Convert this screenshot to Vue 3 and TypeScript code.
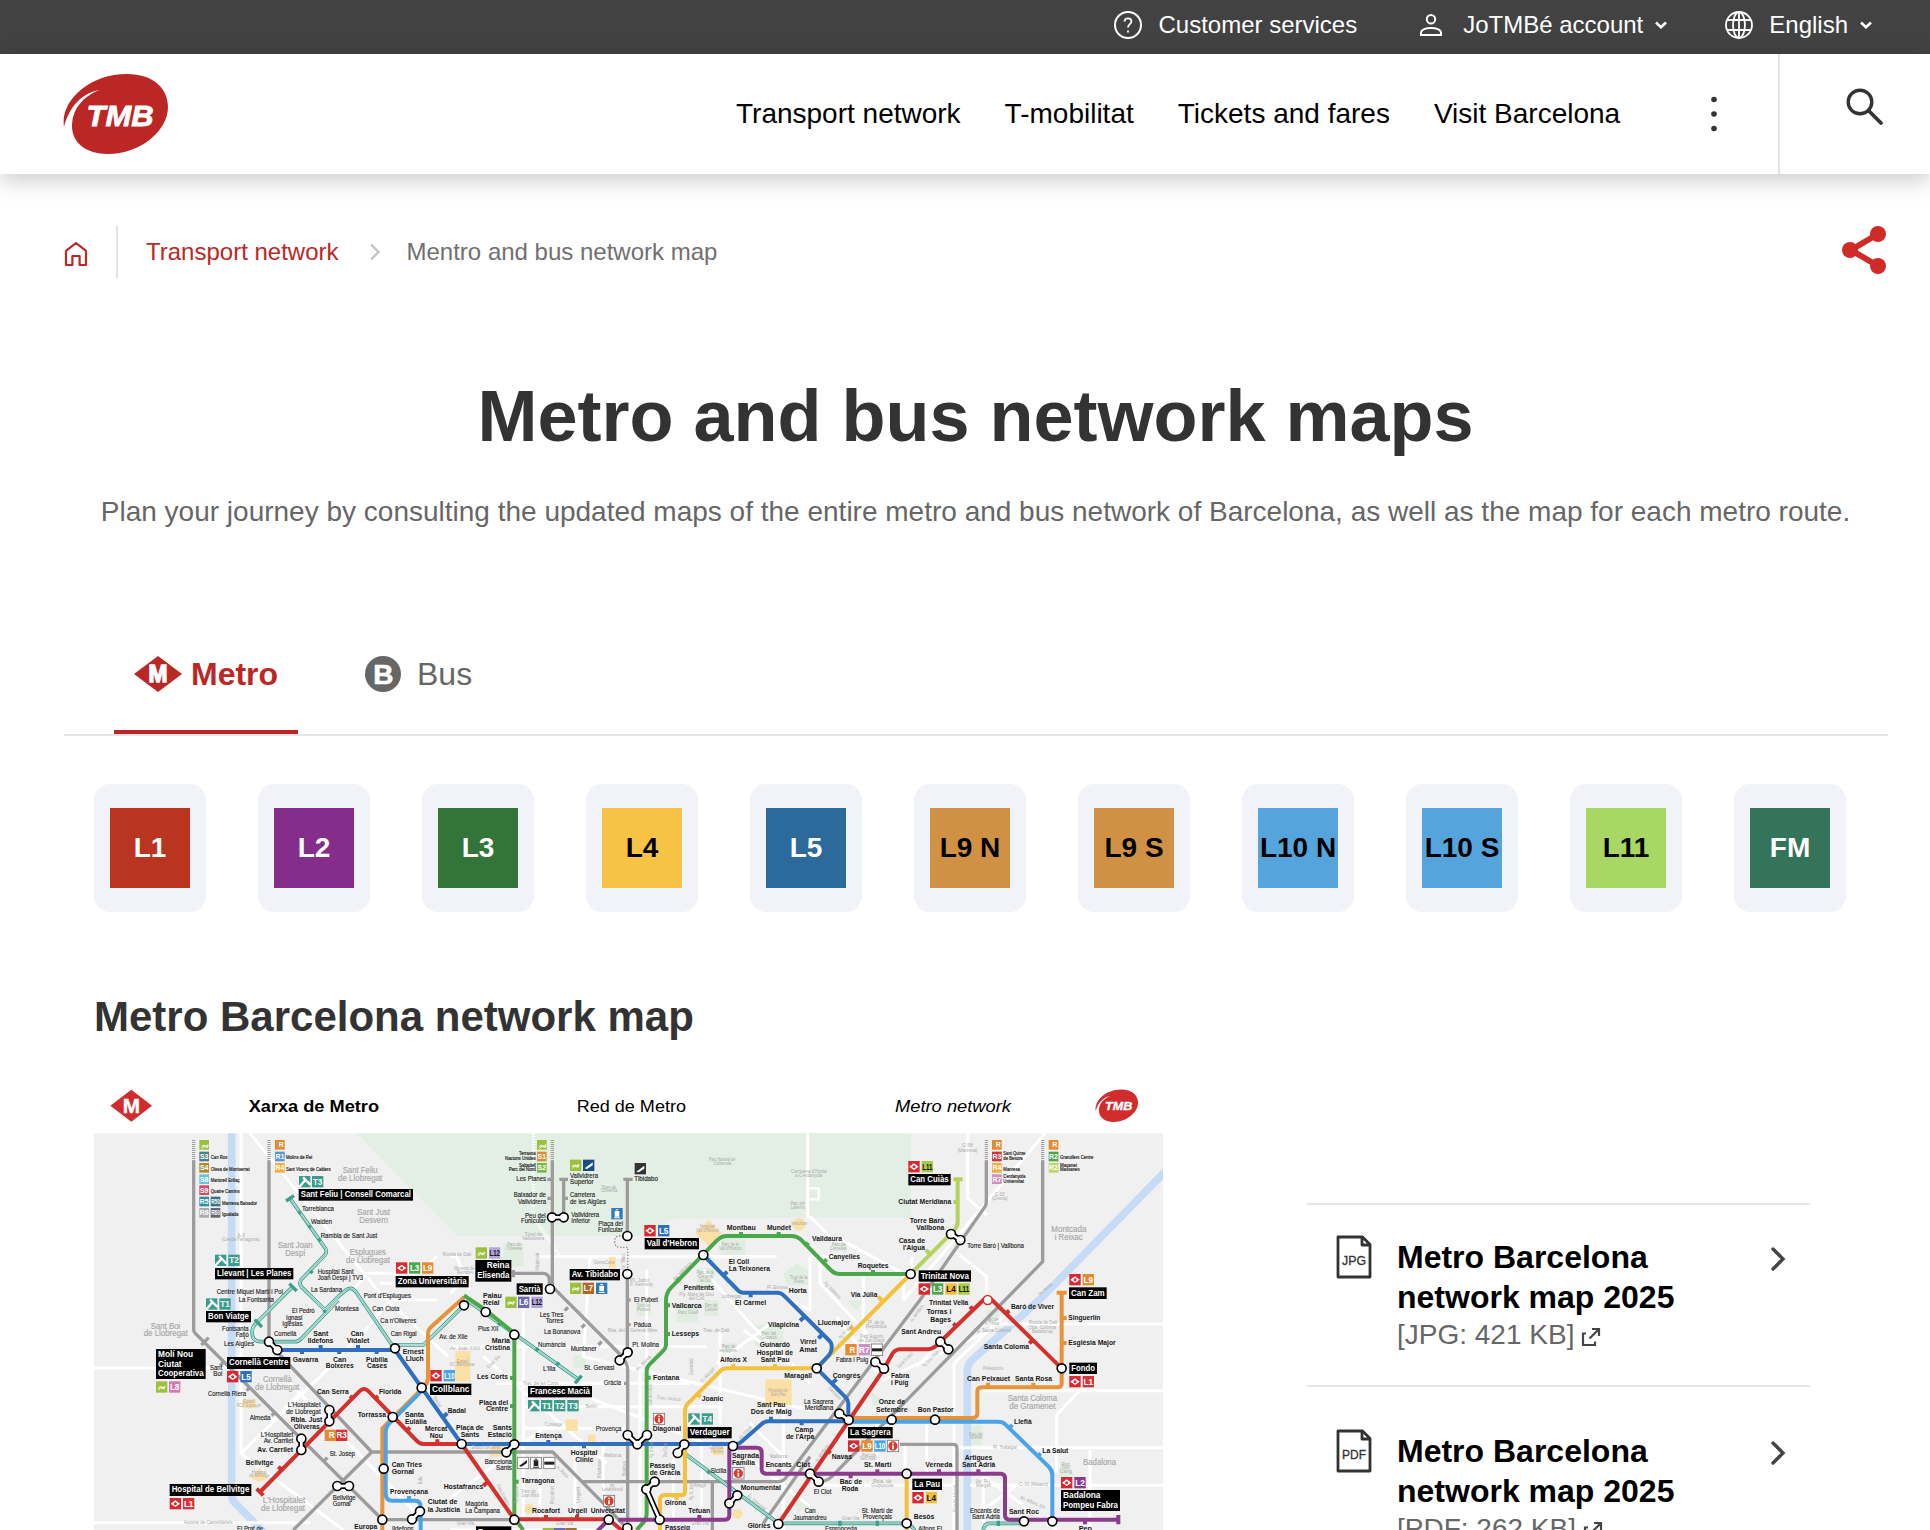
<script setup lang="ts">
interface Line { name: string; bg: string; fg: string }
const lines: Line[] = [
  { name: 'L1', bg: '#b93520', fg: '#fff' },
  { name: 'L2', bg: '#842d8a', fg: '#fff' },
  { name: 'L3', bg: '#337539', fg: '#fff' },
  { name: 'L4', bg: '#f6c344', fg: '#000' },
  { name: 'L5', bg: '#2b6a9b', fg: '#fff' },
  { name: 'L9 N', bg: '#d19145', fg: '#000' },
  { name: 'L9 S', bg: '#d19145', fg: '#000' },
  { name: 'L10 N', bg: '#56a4dc', fg: '#000' },
  { name: 'L10 S', bg: '#56a4dc', fg: '#000' },
  { name: 'L11', bg: '#a9d763', fg: '#000' },
  { name: 'FM', bg: '#34745a', fg: '#fff' },
]
const nav = ['Transport network', 'T-mobilitat', 'Tickets and fares', 'Visit Barcelona']
const files = [
  { type: 'JPG', size: '421 KB' },
  { type: 'PDF', size: '262 KB' },
]

// Map labels, grouped by sheet tile: kind, left, right, baseline, text, rotation.
// Kinds: m metro station, r other station, a area name, t tiny grey street or park, x tiny black
type Label = [string, number, number, number, string, number?]
interface Tile { ox: number; oy: number; labels: Label[] }
const tiles: Tile[] = [
  { ox: 0, oy: 0, labels: [
    ['x', 362, 412, 267, 'Can Ros'], ['x', 362, 479, 302, 'Olesa de Montserrat'], ['x', 362, 449, 336, 'Martorell Enllaç'],
    ['x', 362, 449, 370, 'Quatre Camins'], ['x', 396, 501, 404, 'Manresa Baixador'], ['x', 396, 445, 438, 'Igualada'],
    ['x', 588, 667, 267, 'Molins de Rei'], ['x', 588, 722, 302, 'Sant Vicenç de Calders'],
    ['a', 758, 863, 308, 'Sant Feliu'], ['a', 744, 877, 332, 'de Llobregat'], ['r', 636, 732, 424, 'Torreblanca'],
    ['r', 663, 726, 462, 'Walden'], ['r', 692, 862, 504, 'Rambla de Sant Just'], ['a', 801, 900, 436, 'Sant Just'], ['a', 808, 894, 460, 'Desvern'],
    ['t', 442, 465, 500, 'A-2'], ['t', 396, 509, 514, '(Lleida-Tarragona)'], ['a', 563, 668, 535, 'Sant Joan'], ['a', 586, 646, 559, 'Despí'],
    ['a', 779, 888, 556, 'Esplugues'], ['a', 768, 900, 579, 'de Llobregat'], ['r', 683, 791, 611, 'Hospital Sant'], ['r', 683, 819, 630, 'Joan Despí | TV3'],
    ['r', 663, 756, 665, 'La Sardana'], ['r', 380, 579, 671, 'Centre Miquel Martí i Pol'], ['r', 446, 552, 696, 'La Fontsanta'],
    ['r', 821, 963, 685, "Pont d'Esplugues"], ['t', 1058, 1144, 559, 'Ronda de Dalt'],
  ] },
  { ox: 0, oy: 690, labels: [
    ['r', 606, 674, 38, 'El Pedró'], ['r', 735, 806, 34, 'Montesa'], ['r', 847, 928, 32, 'Can Clota'], ['r', 588, 637, 59, 'Ignasi'], ['r', 577, 637, 79, 'Iglésias'],
    ['r', 871, 979, 69, "Ca n'Oliveres"], ['r', 902, 980, 107, 'Can Rigal'], ['r', 1048, 1133, 117, 'Av. de Xile'],
    ['a', 182, 271, 86, 'Sant Boi'], ['a', 161, 293, 109, 'de Llobregat'], ['r', 396, 476, 93, 'Fontsanta'], ['r', 437, 476, 112, 'Fatjó'], ['r', 402, 492, 137, 'Les Aigües'],
    ['r', 552, 619, 108, 'Cornellà'], ['m', 670, 715, 109, 'Sant'], ['m', 653, 730, 130, 'Ildefons'], ['m', 782, 821, 109, 'Can'], ['m', 770, 838, 130, 'Vidalet'],
    ['m', 608, 685, 185, 'Gavarra'], ['m', 729, 769, 185, 'Can'], ['m', 707, 791, 205, 'Boixeres'], ['m', 828, 893, 185, 'Pubilla'], ['m', 831, 891, 205, 'Cases'],
    ['m', 938, 1001, 162, 'Ernest'], ['m', 947, 1001, 182, 'Lluch'], ['r', 360, 397, 211, 'Sant'], ['r', 370, 397, 229, 'Boi'],
    ['a', 519, 605, 247, 'Cornellà'], ['a', 495, 628, 270, 'de Llobregat'], ['r', 354, 468, 287, 'Cornellà Riera'], ['m', 681, 776, 282, 'Can Serra'], ['m', 867, 934, 282, 'Florida'],
    ['t', 460, 493, 308, 'Estadi'], ['t', 440, 513, 320, 'RCD Espanyol'], ['r', 593, 692, 322, "L'Hospitalet"], ['r', 589, 692, 341, 'de Llobregat'],
    ['m', 602, 697, 367, 'Rbla. Just'], ['m', 611, 689, 387, 'Oliveras'], ['r', 479, 541, 360, 'Almeda'], ['m', 803, 888, 352, 'Torrassa'],
    ['m', 945, 1002, 352, 'Santa'], ['m', 945, 1010, 373, 'Eulàlia'], ['m', 1005, 1072, 394, 'Mercat'], ['m', 1019, 1059, 414, 'Nou'],
    ['r', 512, 610, 410, "L'Hospitalet"], ['r', 521, 610, 429, 'Av. Carrilet'], ['m', 502, 609, 456, 'Av. Carrilet'], ['r', 719, 795, 469, 'St. Josep'],
    ['m', 467, 550, 496, 'Bellvitge'], ['t', 485, 530, 521, 'Hospital'], ['t', 478, 538, 531, 'de Bellvitge'], ['m', 905, 996, 502, 'Can Tries'], ['m', 905, 972, 523, 'Gornal'],
    ['a', 518, 646, 609, "L'Hospitalet"], ['a', 513, 645, 632, 'de Llobregat'], ['m', 900, 1014, 583, 'Provençana'], ['r', 728, 797, 600, 'Bellvitge'], ['r', 728, 782, 619, 'Gornal'],
    ['m', 1013, 1102, 613, 'Ciutat de'], ['m', 1013, 1110, 635, 'la Justícia'], ['t', 281, 428, 673, 'Autovia de Castelldefels'], ['r', 441, 519, 692, 'El Prat de'],
    ['m', 793, 862, 687, 'Europa'], ['r', 906, 971, 692, 'Ildefons'], ['m', 1073, 1128, 338, 'Badal'], ['m', 1061, 1180, 567, 'Hostafrancs'],
    ['t', 980, 1005, 545, 'Rda.', -90], ['t', 1025, 1060, 310, 'Badal', 60],
  ] },
  { ox: 1080, oy: 0, labels: [
    ['x', 207, 257, 256, 'Terrassa'], ['x', 165, 257, 270, 'Nacions Unides'], ['x', 207, 257, 290, 'Sabadell'], ['x', 176, 257, 304, 'Parc del Nord'],
    ['r', 199, 288, 334, 'Les Planes'], ['r', 360, 444, 325, 'Vallvidrera'], ['r', 360, 431, 343, 'Superior'], ['r', 553, 624, 334, 'Tibidabo'],
    ['t', 455, 498, 356, 'Torre de'], ['t', 452, 502, 367, 'Collserola'], ['r', 191, 288, 381, 'Baixador de'], ['r', 204, 288, 401, 'Vallvidrera'],
    ['r', 360, 435, 381, 'Carretera'], ['r', 360, 468, 401, 'de les Aigües'], ['r', 225, 287, 444, 'Peu del'], ['r', 213, 287, 460, 'Funicular'],
    ['r', 364, 447, 440, 'Vallvidrera'], ['r', 364, 420, 458, 'Inferior'], ['r', 445, 519, 468, 'Plaça del'], ['r', 444, 518, 486, 'Funicular'],
    ['t', 224, 276, 498, 'Túnel de'], ['t', 217, 282, 509, 'Vallvidrera'], ['t', 172, 214, 528, 'Parc de'], ['t', 170, 216, 539, "l'Oreneta"],
    ['t', 777, 856, 272, 'Parc Natural de'], ['t', 790, 844, 284, 'Collserola'], ['t', 1023, 1130, 310, "Carretera d'Horta"], ['t', 1036, 1117, 322, 'a Cerdanyola'],
    ['t', 1022, 1064, 405, 'Parc del'], ['t', 1022, 1064, 417, 'Laberint'], ['t', 749, 794, 474, 'Hospital'], ['t', 738, 807, 486, "Vall d'Hebron"],
    ['m', 830, 917, 480, 'Montbau'], ['m', 951, 1023, 480, 'Mundet'], ['t', 1023, 1072, 466, 'Velòdrom'],
    ['t', 815, 866, 528, 'Parc de la'], ['t', 807, 875, 540, "Vall d'Hebron"], ['m', 836, 897, 583, 'El Coll'], ['m', 836, 960, 603, 'La Teixonera'],
    ['t', 431, 494, 582, 'CosmoCaixa'], ['t', 12, 73, 601, 'Monestir de'], ['t', 20, 72, 612, 'Pedralbes'], ['t', 540, 598, 637, 'Pl. John'], ['t', 541, 610, 649, 'F. Kennedy'],
    ['t', 740, 791, 612, 'Parc de la'], ['t', 744, 788, 624, 'Creueta'], ['t', 749, 784, 636, 'del Coll'], ['m', 701, 792, 659, 'Penitents'], ['t', 688, 792, 679, 'Pg. Mare de Déu'], ['t', 716, 763, 690, 'del Coll'],
    ['t', 951, 1012, 656, 'Pl. Eivissa'], ['m', 1016, 1070, 670, 'Horta'], ['t', 815, 875, 684, 'Llobregós'], ['t', 1020, 1072, 628, 'Turó de la'], ['t', 1033, 1060, 640, 'Peira'],
    ['m', 99, 155, 684, 'Palau'], ['r', 552, 624, 695, 'El Putxet'], ['t', 235, 290, 580, 'Major de', -90], ['t', 495, 545, 580, 'Av. Tibid.', -90], ['t', 660, 733, 608, 'Av. Vallcarca', -45],
  ] },
  { ox: 1080, oy: 690, labels: [
    ['m', 99, 148, 15, 'Reial'], ['r', 269, 340, 50, 'Les Tres'], ['r', 287, 340, 69, 'Torres'], ['r', 84, 145, 94, 'Pius XII'], ['r', 282, 391, 102, 'La Bonanova'],
    ['m', 125, 180, 129, 'Maria'], ['m', 105, 180, 150, 'Cristina'], ['r', 264, 347, 140, 'Numància'], ['r', 362, 440, 153, 'Muntaner'], ['t', 0, 90, 151, 'Av. Joan XXIII'],
    ['t', 20, 55, 188, 'Estadi'], ['t', 0, 73, 198, 'FC Barcelona'], ['r', 279, 316, 214, "L'Illa"], ['r', 403, 493, 210, 'St. Gervasi'], ['m', 81, 174, 238, 'Les Corts'],
    ['r', 461, 513, 256, 'Gràcia'], ['t', 218, 325, 254, 'Trav. de les Corts'], ['m', 87, 174, 314, 'Plaça del'], ['m', 108, 174, 334, 'Centre'], ['t', 407, 441, 323, 'Berlín'],
    ['t', 284, 336, 379, 'Còrsega'], ['m', 18, 101, 390, 'Plaça de'], ['m', 32, 88, 411, 'Sants'], ['m', 128, 186, 390, 'Sants'], ['m', 113, 186, 411, 'Estació'],
    ['m', 256, 335, 413, 'Entença'], ['r', 437, 514, 393, 'Provença'], ['t', 65, 150, 448, 'Estació de Sants'], ['m', 362, 442, 464, 'Hospital'], ['m', 376, 430, 485, 'Clínic'], ['t', 461, 514, 471, 'Mallorca'],
    ['r', 104, 186, 491, 'Barcelona'], ['r', 138, 186, 509, 'Sants'], ['m', 214, 313, 550, 'Tarragona'], ['t', 215, 257, 580, 'Parc de'], ['t', 213, 267, 591, 'Joan Miró'],
    ['m', 246, 330, 640, 'Rocafort'], ['m', 354, 411, 640, 'Urgell'], ['m', 422, 525, 640, 'Universitat'], ['r', 46, 113, 618, 'Magòria'], ['r', 46, 150, 638, 'La Campana'],
    ['t', 20, 72, 675, 'Gran Via'], ['t', 318, 370, 675, 'Gran Via'], ['t', 724, 776, 675, 'Gran Via'], ['t', 480, 497, 563, 'Pl.'], ['t', 455, 518, 574, 'Letamendi'],
    ['r', 551, 603, 80, 'Pàdua'], ['r', 547, 627, 142, 'Pl. Molina'], ['t', 473, 524, 95, 'Rda. del'], ['t', 540, 622, 95, 'General Mitre'], ['m', 665, 755, 23, 'Vallcarca'], ['m', 665, 747, 108, 'Lesseps'],
    ['m', 609, 688, 239, 'Fontana'], ['t', 760, 838, 97, 'Trav. de Dalt'], ['m', 855, 948, 15, 'El Carmel'], ['m', 954, 1047, 80, 'Vilapicina'], ['t', 684, 744, 41, 'Parc Güell'], ['t', 764, 802, 22, 'Parc del'], ['t', 764, 802, 33, 'Carmel'], ['t', 560, 600, 22, 'Turó del'], ['t', 560, 600, 33, 'Putxet'],
    ['t', 934, 978, 105, 'Parc del'], ['t', 934, 980, 117, 'Guinardó'], ['m', 929, 1020, 142, 'Guinardó'], ['m', 920, 1029, 164, 'Hospital de'], ['m', 932, 1019, 186, 'Sant Pau'],
    ['m', 1050, 1100, 133, 'Virrei'], ['m', 1048, 1101, 155, 'Amat'],
    ['m', 810, 891, 186, 'Alfons X'], ['t', 815, 856, 144, 'Parc de'], ['t', 808, 860, 155, 'les Aigües'], ['m', 1003, 1086, 235, 'Maragall'], ['t', 955, 1013, 276, 'Hospital de'], ['t', 962, 1008, 287, 'Sant Pau'],
    ['m', 755, 820, 304, 'Joanic'], ['t', 620, 692, 300, 'Trav. Gràcia', 5], ['m', 921, 1006, 322, 'Sant Pau'], ['m', 902, 1025, 343, 'Dos de Maig'], ['r', 1062, 1150, 312, 'La Sagrera'], ['r', 1064, 1150, 330, 'Meridiana'],
    ['m', 608, 693, 394, 'Diagonal'], ['m', 1034, 1090, 396, 'Camp'], ['m', 1008, 1093, 418, "de l'Arpa"], ['t', 777, 819, 448, 'Sagrada'], ['t', 783, 818, 458, 'Família'],
    ['m', 599, 675, 503, 'Passeig'], ['m', 599, 691, 525, 'de Gràcia'], ['r', 782, 829, 518, 'Sicília'], ['m', 846, 927, 474, 'Sagrada'], ['m', 846, 915, 495, 'Família'],
    ['m', 947, 1025, 502, 'Encants'], ['m', 1039, 1080, 502, 'Clot'], ['t', 959, 1012, 473, 'Mallorca'], ['m', 872, 993, 570, 'Monumental'], ['m', 644, 708, 614, 'Girona'], ['m', 715, 781, 640, 'Tetuan'],
    ['m', 645, 720, 691, 'Passeig'], ['m', 893, 961, 684, 'Glòries'], ['r', 1064, 1097, 640, 'Can'], ['r', 1030, 1130, 659, 'Jaumandreu'], ['t', 731, 768, 560, 'Aragó'],
    ['t', 375, 425, 56, 'Via Augusta', 48], ['t', 105, 155, 190, 'Gran Via', -45], ['t', 550, 610, 195, 'Av. Riera', -45], ['t', 570, 633, 290, 'Gran de Gràcia', -90],
    ['t', 700, 750, 205, 'Escorial', -90], ['t', 745, 800, 230, 'Pi i Margall', -50], ['t', 420, 476, 510, 'Muntaner', -90], ['t', 500, 545, 510, 'Balmes', -90], ['t', 280, 332, 590, 'Rocafort', -90], ['t', 362, 410, 590, 'Urgell', -90],
    ['t', 125, 195, 590, 'Creu Coberta', 62], ['t', 175, 225, 590, 'Tarragona', -90], ['t', 315, 360, 520, 'Av. Roma', 45], ['t', 885, 955, 612, 'Av. Diagonal', 38], ['t', 860, 912, 402, 'Av. Gaudí', -45], ['t', 700, 750, 580, 'Pg. St. Joan', -90], ['t', 582, 628, 455, 'Pg. Gràcia', -90], ['t', 624, 666, 455, 'Pau Claris', -90],
  ] },
  { ox: 2160, oy: 0, labels: [
    ['t', 456, 488, 232, 'C-58'], ['t', 442, 502, 245, '(Manresa)'], ['x', 580, 646, 256, 'Sant Quirze'], ['x', 580, 638, 269, 'de Besora'], ['x', 580, 630, 302, 'Manresa'], ['x', 580, 646, 325, 'Cerdanyola'], ['x', 580, 642, 338, 'Universitat'],
    ['x', 750, 850, 267, 'Granollers Centre'], ['x', 750, 801, 290, 'Maçanet'], ['x', 750, 809, 304, 'Massanes'], ['m', 265, 424, 402, 'Ciutat Meridiana'], ['t', 554, 584, 378, 'C-33'], ['t', 545, 593, 391, '(Girona)'],
    ['m', 299, 403, 459, 'Torre Baró'], ['m', 319, 403, 481, 'Vallbona'], ['a', 724, 829, 487, 'Montcada'], ['a', 734, 818, 510, 'i Reixac'], ['m', 6, 96, 514, 'Valldaura'], ['t', 66, 108, 528, 'Parc de'], ['t', 60, 110, 540, 'Canyelles'],
    ['m', 266, 345, 518, 'Casa de'], ['m', 279, 345, 540, "l'Aigua"], ['r', 472, 642, 535, 'Torre Baró | Vallbona'], ['m', 56, 150, 566, 'Canyelles'], ['m', 143, 236, 593, 'Roquetes'], ['m', 122, 202, 681, 'Via Júlia'], ['t', 35, 100, 665, 'Pg. Valldaura', 45], ['t', 682, 732, 662, 'Riu Besòs', -42],
  ] },
  { ox: 2160, oy: 690, labels: [
    ['m', 357, 475, 15, 'Trinitat Vella'], ['m', 350, 424, 43, 'Torras i'], ['m', 361, 423, 66, 'Bages'], ['m', 603, 732, 26, 'Baró de Viver'], ['m', 775, 871, 59, 'Singuerlín'], ['m', 775, 917, 134, 'Església Major'],
    ['m', 23, 120, 75, 'Llucmajor'], ['t', 173, 222, 73, 'Pl. de la'], ['t', 168, 230, 84, 'República'], ['t', 151, 220, 114, 'Parc Esports'], ['t', 148, 224, 126, 'de Can Dragó'], ['m', 274, 393, 103, 'Sant Andreu'],
    ['r', 78, 175, 185, 'Fabra i Puig'], ['m', 521, 657, 147, 'Santa Coloma'], ['t', 492, 602, 96, 'Pg. Santa Coloma'], ['t', 656, 742, 73, 'Ronda de Dalt'], ['t', 655, 738, 86, '(Sta. Coloma'], ['t', 666, 728, 98, 'Badalona)'], ['t', 526, 566, 64, 'Parc de'], ['t', 524, 568, 75, 'la Trinitat'],
    ['m', 68, 151, 233, 'Congrés'], ['m', 243, 298, 235, 'Fabra'], ['m', 243, 295, 256, 'i Puig'], ['t', 519, 580, 209, 'Poliesportiu'], ['m', 471, 600, 243, 'Can Peixauet'], ['m', 615, 726, 243, 'Santa Rosa'],
    ['a', 593, 741, 303, 'Santa Coloma'], ['a', 598, 736, 326, 'de Gramenet'], ['m', 206, 285, 313, 'Onze de'], ['m', 198, 293, 335, 'Setembre'], ['m', 323, 431, 335, 'Bon Pastor'], ['m', 612, 665, 371, 'Llefià'],
    ['m', 697, 775, 458, 'La Salut'], ['t', 478, 518, 408, 'Parc del'], ['t', 480, 517, 418, 'Molinet'], ['t', 549, 622, 447, 'Pl. Trafalgar'], ['m', 65, 126, 477, 'Navas'], ['m', 162, 244, 502, 'St. Martí'], ['t', 155, 198, 470, 'Parc de'], ['t', 150, 202, 481, 'Sant Martí'],
    ['m', 346, 427, 502, 'Verneda'], ['m', 464, 547, 480, 'Artigues'], ['m', 456, 556, 502, 'Sant Adrià'], ['a', 819, 918, 495, 'Badalona'], ['m', 89, 156, 553, 'Bac de'], ['m', 95, 145, 574, 'Roda'], ['t', 188, 245, 548, 'Rbla. de'], ['t', 184, 250, 560, 'Guipúscoa'],
    ['r', 11, 64, 581, 'El Clot'], ['t', 498, 540, 548, 'Av. Pi i'], ['t', 498, 542, 560, 'Margall'], ['t', 628, 714, 559, 'C-31 (Mataró)'], ['t', 756, 780, 498, 'Parc'], ['t', 756, 780, 508, 'Torrent'], ['t', 750, 786, 518, 'Canig'],
    ['r', 155, 249, 640, 'St. Martí de'], ['r', 158, 246, 658, 'Provençals'], ['t', 96, 148, 659, 'Gran Via'], ['m', 311, 373, 656, 'Besòs'], ['r', 480, 570, 640, 'Encants de'], ['r', 486, 570, 658, 'Sant Adrià'], ['m', 597, 687, 643, 'Sant Roc'],
    ['r', 45, 141, 692, 'Espronceda'], ['r', 325, 396, 694, 'Alfons El'], ['m', 806, 846, 692, 'Pep'], ['t', 395, 475, 600, 'Ronda Litoral', -90], ['t', 290, 350, 45, 'Av. Meridiana', -55], ['t', 255, 315, 185, 'Gran de St. Andreu', -45], ['t', 330, 395, 180, 'Pg. Torras i Bages', -45], ['t', 80, 135, 100, 'Pg. Pi i Molist', -45], ['t', 628, 708, 612, 'Av. Alfons XIII', 24], ['t', 5, 65, 465, 'Av. Meridiana', -55], ['t', 50, 100, 285, 'Garcilaso', 45],
  ] },
]
const sizes: Record<string, number> = { m: 21.5, r: 20.5, a: 25, t: 15, x: 14 }

// Black interchange name plates: x, y, width, height, lines of text
type Plate = [number, number, number, number, string[]]
const plates: Plate[] = [
  [626, 357, 343, 35, ['Sant Feliu | Consell Comarcal']], [375, 594, 235, 34, ['Llevant | Les Planes']], [917, 618, 219, 34, ['Zona Universitària']],
  [348, 723, 135, 34, ['Bon Viatge']], [198, 837, 149, 90, ['Molí Nou', 'Ciutat', 'Cooperativa']], [411, 861, 190, 36, ['Cornellà Centre']],
  [1020, 941, 124, 34, ['Collblanc']], [239, 1242, 245, 36, ['Hospital de Bellvitge']],
  [1156, 570, 108, 65, ['Reina', 'Elisenda']], [1280, 640, 78, 34, ['Sarrià']], [1439, 597, 151, 34, ['Av. Tibidabo']], [1664, 504, 163, 34, ["Vall d'Hebron"]],
  [1314, 948, 192, 34, ['Francesc Macià']], [1793, 1071, 132, 34, ['Verdaguer']], [1158, 1369, 106, 34, ['Espanya']],
  [2455, 312, 127, 34, ['Can Cuiàs']], [2486, 601, 157, 34, ['Trinitat Nova']], [2937, 652, 113, 35, ['Can Zam']], [2938, 878, 83, 34, ['Fondo']],
  [2274, 1071, 134, 34, ['La Sagrera']], [2467, 1226, 89, 34, ['La Pau']], [2913, 1260, 177, 63, ['Badalona', 'Pompeu Fabra']],
]
const plateFit = (p: Plate, s: string) => (s.length === Math.max(...p[4].map(t => t.length)) ? p[2] - 12 : undefined)

// Line badges: x, y, text, fill, text colour ('M' metro, 'F' railway, 'T' tram, 'R' rodalies, 'i' info)
type Badge = [number, number, string, string, string?]
const red = '#d9282f', lime = '#9cc03c', teal = '#3a9c8c', org = '#e58a2e'
const badges: Badge[] = [
  [328, 210, 'F', lime], [328, 245, 'S3', '#507d8a'], [328, 279, 'S4', '#aa8a2a'], [328, 313, 'S8', '#64c6dc'], [328, 346, 'S9', '#e0455f'], [328, 380, 'R5', '#3191a5'], [362, 380, 'R50', '#337487'], [328, 414, 'R6', '#aaaaaa'], [362, 414, 'R60', '#666670'],
  [555, 210, 'R', org], [555, 245, 'R1', '#5596d5'], [555, 279, 'R4', '#f4ad38'], [627, 318, 'T', teal], [666, 318, 'T3', teal], [375, 554, 'T', teal], [415, 554, 'T2', teal],
  [918, 577, 'M', red], [957, 577, 'L3', '#4ba64b'], [996, 577, 'L9', org], [348, 685, 'T', teal], [388, 685, 'T1', teal], [198, 934, 'F', lime], [237, 934, 'L8', '#d878b2'],
  [411, 903, 'M', red], [451, 903, 'L5', '#2e72bf'], [1021, 900, 'M', red], [1061, 900, 'L10', '#4ba4e4'], [704, 1079, 'R', org], [738, 1079, 'R3', '#d93238'], [239, 1284, 'M', red], [279, 1284, 'L1', '#d93238'],
  [1341, 210, 'F', lime], [1341, 245, 'S1', org], [1341, 279, 'S2', '#78b845'], [1440, 269, 'F', lime], [1479, 269, '◢', '#1b4a88'], [1564, 414, '▣', '#3078c0'], [1663, 465, 'M', red], [1704, 465, 'L5', '#2e72bf'],
  [1157, 532, 'F', lime], [1197, 532, 'L12', '#b3a5d6', '#111'], [1440, 638, 'F', lime], [1478, 638, 'L7', '#ad6728'], [1518, 638, '▣', '#3078c0'],
  [1246, 680, 'F', lime], [1284, 680, 'L6', '#6c69b5'], [1324, 680, 'L12', '#b3a5d6', '#111'], [1314, 990, 'T', teal], [1353, 990, 'T1', teal], [1392, 990, 'T2', teal], [1432, 990, 'T3', teal], [1795, 1030, 'T', teal], [1835, 1030, 'T4', teal],
  [1358, 1374, 'F', lime], [1392, 1374, 'L8', '#6c69b5'], [1426, 1374, 'S', '#ad6728'], [1690, 1030, 'i', '#fff'], [1928, 1193, 'i', '#fff'], [1540, 1276, 'i', '#fff'], [1634, 279, '◢', '#333'], [1282, 1162, '◢', '#fff', '#222'], [1321, 1162, '▣', '#fff', '#222'], [1361, 1162, '▬', '#fff', '#222'],
  [2455, 273, 'M', red], [2495, 273, 'L11', '#acc943', '#111'], [2706, 210, 'R', org], [2706, 245, 'R3', '#d93238'], [2706, 279, 'R4', '#f4ad38'], [2706, 313, 'R7', '#ce90c2'], [2876, 210, 'R', org], [2876, 245, 'R2', '#4ba64b'], [2876, 279, 'R2', '#bdd566'],
  [2486, 640, 'M', red], [2526, 640, 'L3', '#4ba64b'], [2566, 640, 'L4', '#f2bd38', '#111'], [2605, 640, 'L11', '#acc943', '#111'], [2938, 612, 'M', red], [2978, 612, 'L9', org], [2938, 918, 'M', red], [2978, 918, 'L1', '#d93238'],
  [2266, 822, 'R', org], [2306, 822, 'R7', '#ce90c2'], [2344, 822, '▬', '#fff', '#222'], [2274, 1111, 'M', red], [2314, 1111, 'L9', org], [2353, 1111, 'L10', '#4ba4e4'], [2392, 1111, 'i', '#fff'], [2467, 1266, 'M', red], [2507, 1266, 'L4', '#f2bd38', '#111'], [2913, 1221, 'M', red], [2953, 1221, 'L2', '#8c3a8c'],
]
const badgeSize = (b: Badge): number => (b[1] < 450 && /^[RSF]/.test(b[2]) && b[0] !== 1440 ? 29 : 34)

const rings: [number, number][] = [
  [915, 835], [995, 953], [908, 1041], [881, 1196], [877, 1349], [1122, 706], [1187, 726], [1273, 794], [1380, 657], [1612, 498], [1612, 612], [1840, 555], [1115, 1122], [1273, 1349], [1556, 1349], [1612, 1374], [1929, 1128], [2065, 1362],
  [2462, 612], [2180, 895], [2915, 895], [2405, 1049], [2535, 1049], [2450, 1211], [2450, 1360], [2802, 1354], [2887, 1354], [2693, 690],
]
const links: string[] = [
  'M537 815L562 840', 'M718 1020V1054', 'M634 1106V1140', 'M742 1248H777', 'M990 1324L966 1348', 'M1386 442H1421', 'M1613 847L1589 871', 'M1273 1123L1249 1147', 'M1613 1095L1642 1123L1671 1095', 'M1783 1123L1763 1149', 'M1694 1235L1669 1258L1709 1349', 'M1942 1276L1918 1300',
  'M2583 492L2611 510', 'M2551 815L2575 838', 'M2356 876L2382 896', 'M2248 1031L2276 1050', 'M2160 1211L2186 1235',
]
const linkDots = links.flatMap(d => {
  const out: [number, number][] = []
  let x = 0, y = 0
  for (const m of d.matchAll(/([MLHV])(\d+)(?: (\d+))?/g)) {
    if (m[1] === 'H') x = +m[2]
    else if (m[1] === 'V') y = +m[2]
    else { x = +m[2]; y = +m[3] }
    out.push([x, y])
  }
  return out
})

interface Route { d: string; c: string }
const routes: Route[] = [
  { c: '#e8923a', d: 'M877 1380V1075L1000 952Q1014 940 1014 920V790Q1014 780 1024 770L1122 682M2275 1044H2647Q2662 1044 2662 1030V965Q2662 952 2676 952H2900Q2915 952 2915 938V668M2900 668H2930M2694 952V938M2830 952V938M2915 744H2930M2915 819H2930' },
  { c: '#4aa3e6', d: 'M1000 958L895 1063Q887 1072 887 1085V1270Q887 1292 905 1292H975Q992 1292 992 1310V1380M957 1292V1278M2275 1055H2725Q2738 1055 2746 1063L2876 1190Q2887 1200 2887 1215V1350M2757 1074L2767 1065M2842 1160L2852 1150' },
  { c: '#4aa84a', d: 'M1122 676L1187 720L1273 790V1345L1300 1380M1640 1380L1662 1355Q1670 1345 1670 1332V902Q1670 892 1678 884L1720 842Q1728 834 1728 824V690Q1728 668 1744 652L1880 512Q1894 498 1910 498H2105Q2120 498 2132 508L2222 600Q2234 612 2250 612H2462M1953 498V486M2066 498V486M2145 530L2155 518M2200 578L2210 568M2349 612V600M1728 706H1740M1728 792H1740M1670 923H1682M1760 625L1770 635M1273 924H1260M1273 1008H1260M1273 1235H1286' },
  { c: '#b6d15c', d: 'M2590 328H2618M2603 328V455Q2603 470 2592 482L2462 612M2603 396H2590M2518 550L2508 540' },
  { c: '#f3c13a', d: 'M2462 612L2180 895H1910Q1898 895 1890 904L1794 1000Q1785 1010 1785 1022V1265Q1785 1275 1775 1275H1725Q1710 1275 1710 1290V1380M1930 895V882M2055 895V882M1820 970L1832 980M1760 1275V1290M2375 690L2365 680M2280 770L2292 780M2450 1212V1380' },
  { c: '#2f6fc0', d: 'M565 840H915L1115 1122H1938Q1948 1122 1956 1114L2015 1062Q2023 1054 2035 1054H2262Q2275 1054 2275 1040V1000Q2275 990 2267 982L2180 895L2217 855Q2225 846 2225 835V828Q2225 818 2216 810L2085 680Q2075 668 2062 668H1960Q1950 668 1943 660L1840 555M692 838V825M804 838V825M636 840V852M748 840V852M860 840V852M1375 1122V1110M1482 1122V1135M1900 615L1912 605M1982 668V682M2043 1054V1040M2135 1054V1066M2130 752L2142 742M2185 805L2195 795M2228 938L2240 928M1060 1040L1072 1030' },
  { c: '#d2312d', d: 'M500 1256L520 1276M510 1266L808 964Q822 950 836 964L978 1110Q988 1122 1000 1122H1115L1273 1348H1556L1600 1385M2065 1362L2380 900L2405 855Q2414 838 2430 838H2510Q2526 838 2538 828L2680 690Q2693 676 2706 690L2915 895M780 978L792 988M864 978L854 988M565 1190L578 1202M950 1082L960 1072M1042 1122V1108M1190 1238L1180 1248M1368 1348V1335M1461 1348V1335M2640 710L2650 720M2590 760L2600 770M2748 730L2758 722M2828 810L2818 820M2210 1140L2222 1150' },
  { c: '#8c3a8c', d: 'M1556 1349L1520 1385M1585 1349H1905Q1918 1349 1918 1335V1133H2000Q2015 1133 2015 1148V1197Q2015 1211 2030 1211H2732Q2745 1211 2745 1225V1335Q2745 1349 2760 1349H3085M3085 1335V1363M1828 1349V1335M2066 1211V1198M2282 1211V1225M2362 1211V1198M2547 1211V1198M2665 1211V1198M2985 1349V1363' },
]
const rails = 'M311 272V780Q311 785 316 790L866 1338L877 1349H1273M537 272V820L845 1146H1388L1540 1300L1620 1385M845 1146L610 1380M334 825L356 803M390 887L402 875M470 962L482 950M545 1037L557 1025M700 1175L712 1163M1387 272V650L1592 855Q1613 878 1613 900V1380M1372 328H1387M1372 385H1387M1408 328H1434M1421 328V442M1421 385H1434M1600 328H1628M1612 328V498M1612 612V850M1270 600V622M1273 610H1360Q1378 612 1378 630V650M1424 722L1434 712M1475 773L1485 763M1525 825L1535 815M1613 690H1622M1613 764H1622M1613 940H1602M1475 1235H2065Q2080 1235 2090 1220L2490 690L2685 410Q2689 402 2689 395V272M1867 1235V1380M2020 1360L2160 1160M2186 1235Q2210 1235 2225 1220L2858 575Q2858 572 2858 550V272M2430 1123H2590Q2601 1123 2601 1135V1380'
const trams = 'M600 385L706 535Q713 546 704 556L636 626Q624 640 636 652L705 720L745 680L768 660Q784 648 798 666L906 825H1000L1122 706M608 650L496 762Q480 780 490 805Q498 815 512 815H615Q625 815 635 805L745 690M1130 690L1465 928M1770 1140L2065 1360H2440Q2465 1360 2475 1385M2680 1385Q2680 1360 2700 1360H2800'
const roads = 'M453 190V1150L760 1380M480 190L870 670L1075 860M12 894H420M12 1358H640M453 1150L690 920L840 765L900 690H1040M540 1060L640 960M600 940L1000 1350M870 640H917M1040 560L985 610H830L790 660M1080 560H1100L1140 660M1350 560H2060M1300 690V1380M1500 560L1480 860L2160 1020M1670 600V880M1840 600L1980 760L2160 940M2040 660L2160 720V560H2230M1080 830H1850M1220 940H1800M1300 1010H1900M1300 1075H1610M1180 860L1550 1180M1490 980L1870 1130M1080 1285L1380 1060M1455 1122V1345M1350 1150V1345M1540 1122V1345M1750 1122V1345M1650 880V1340M1835 1122V1345M1960 1150L2160 1310M1890 780V1060M1960 780L2130 900M1980 1060L2140 1220M2080 940V1380M2153 190V445M2633 190V385L2690 435M2865 190L2440 690M2235 500L2440 610V690M2190 560V640L2330 790M2160 440L2230 510M2320 620V840M2470 565H2465V610M2590 540L2690 620V680L2480 890M2240 740L2380 930L2680 790M2680 762H3219M2592 880L2780 700M2592 880V1380M2680 962H3219M2968 962L2900 1035V1210M2650 1045H2440M2590 1133H3219M2160 1246H2600M2640 1246H3219M2360 1046V1211M2445 1123V1211M2510 1060V1211M2680 1200V1380M2670 1210L2900 1380M2780 1246L2680 1320M3000 1140V1380M2050 755L1880 880M1080 670L1180 580M12 1358H660M1080 1380H1540'
const cream = 'M1096 843H1141V935H1096ZM1427 1048H1463V1083H1427ZM1494 1094H1517V1124H1494ZM2026 928H2105V1006H2026ZM1815 490L1855 450L1895 490L1855 528ZM1556 562H1577V595H1556ZM484 1225L508 1195L535 1225L508 1235ZM458 988H498V1015H458ZM1200 1124H1240V1160H1200ZM1868 1132H1902V1155H1868Z'
const parks = 'M1892 502H1966V555H1892ZM1820 595H1872V658H1820ZM1760 704H1825V757H1760ZM1844 690H1885V738H1844ZM1640 690H1682V738H1640ZM1450 855H1487V895H1450ZM1240 520H1300V590H1240ZM1995 765H2080V830H1995ZM1898 820H1940V848H1898ZM2080 610L2120 580L2155 600V645H2090ZM2225 520H2270V550L2225 530ZM2690 720H2728V765L2690 780ZM2645 1065H2674V1125H2645ZM2910 1170L2955 1215H2910ZM2270 690H2320L2300 720ZM2340 960L2385 1000L2350 1010ZM2120 1270L2160 1310L2120 1330Z'

function fit(l: Label) {
  const w = l[2] - l[1]
  const attrs: Record<string, string | number> = {
    x: l[1], y: l[3], 'font-size': sizes[l[0]], textLength: w, lengthAdjust: 'spacingAndGlyphs',
  }
  if (l[5]) attrs.transform = `rotate(${l[5]} ${l[1] + w / 2} ${l[3] - 5})`
  return attrs
}
</script>

<template>
  <div class="page">
    <div class="topbar">
      <a class="top-item help">
        <svg width="28" height="28" viewBox="0 0 28 28" fill="none" stroke="#fff" stroke-width="2"><circle cx="14" cy="14" r="13" /><path d="M10.6 10.6C10.6 8.6 12 7.4 14 7.4s3.4 1.3 3.4 3.1c0 2.6-3.4 2.8-3.4 6M14 19.4v2.2" stroke-width="1.8" /></svg>
        <span>Customer services</span>
      </a>
      <a class="top-item account">
        <svg width="22" height="22" viewBox="0 0 22 22" fill="none" stroke="#fff" stroke-width="2"><circle cx="11" cy="5.3" r="4.2" /><path d="M1 21v-2.2c0-6.4 20-6.4 20 0V21z" /></svg>
        <span>JoTMBé account</span>
        <svg class="caret" width="14" height="10" viewBox="0 0 14 10" fill="none" stroke="#fff" stroke-width="2.6"><path d="M2 2.5l5 4.8 5-4.8" /></svg>
      </a>
      <a class="top-item language">
        <svg width="28" height="28" viewBox="0 0 28 28" fill="none" stroke="#fff" stroke-width="1.8"><circle cx="14" cy="14" r="13" /><ellipse cx="14" cy="14" rx="6" ry="13" /><path d="M14 1v26M2.5 9h23M2.5 19h23" /></svg>
        <span>English</span>
        <svg class="caret" width="14" height="10" viewBox="0 0 14 10" fill="none" stroke="#fff" stroke-width="2.6"><path d="M2 2.5l5 4.8 5-4.8" /></svg>
      </a>
    </div>

    <header class="header">
      <svg class="logo" width="106" height="82" viewBox="0 0 106 82">
        <path fill="#bb2725" d="M1 54C-3 28 26 1 64 1C90 1 105 15 105 34C105 58 77 81 45 81C22 81 8 69 9 51C10 35 20 24 36 17C19 20 6 34 1 54Z" />
        <text x="23.5" y="52.5" font-size="29" textLength="67" lengthAdjust="spacingAndGlyphs" class="mark-text">TMB</text>
      </svg>
      <nav class="nav"><a v-for="n in nav" :key="n">{{ n }}</a></nav>
      <svg class="dots" width="6" height="36" viewBox="0 0 6 36" fill="#333"><circle cx="3" cy="3.5" r="2.8" /><circle cx="3" cy="18" r="2.8" /><circle cx="3" cy="32.5" r="2.8" /></svg>
      <div class="search">
        <svg width="38" height="38" viewBox="0 0 38 38" fill="none" stroke="#333" stroke-width="3.4"><circle cx="14" cy="14" r="11.8" /><path d="M22.5 22.5L35 35" stroke-width="3.8" stroke-linecap="round" /></svg>
      </div>
    </header>

    <div class="crumbs">
      <svg class="home" width="24" height="26" viewBox="0 0 24 26" fill="none" stroke="#bb2725" stroke-width="2.2"><path d="M2 9.8L12 2l10 7.8V24h-6.4V15H8.4v9H2z" stroke-linejoin="round" /></svg>
      <a class="crumb-link">Transport network</a>
      <svg class="sep" width="12" height="18" viewBox="0 0 12 18" fill="none" stroke="#c4c4c4" stroke-width="2.4"><path d="M2 1.5L9.5 9 2 16.5" /></svg>
      <span class="crumb-current">Mentro and bus network map</span>
      <svg class="share" width="46" height="48" viewBox="0 0 46 48"><path d="M36 8L9 24L36 40" fill="none" stroke="#d12b28" stroke-width="6" /><g fill="#d12b28"><circle cx="36" cy="8" r="8" /><circle cx="8" cy="24" r="8" /><circle cx="36" cy="40" r="8" /></g></svg>
    </div>

    <h1>Metro and bus network maps</h1>
    <p class="lead">Plan your journey by consulting the updated maps of the entire metro and bus network of Barcelona, as well as the map for each metro route.</p>

    <div class="tabs">
      <a class="tab active">
        <svg width="48" height="36" viewBox="0 0 48 36"><path d="M24 0L48 18L24 36L0 18Z" fill="#bb2725" /><text x="14.5" y="26" font-size="23" textLength="19" lengthAdjust="spacingAndGlyphs" class="icon-letter heavy">M</text></svg>
        <span>Metro</span>
      </a>
      <a class="tab">
        <svg width="36" height="36" viewBox="0 0 36 36"><circle cx="18" cy="18" r="18" fill="#666" /><text x="18.3" y="28" font-size="28" text-anchor="middle" class="icon-letter">B</text></svg>
        <span>Bus</span>
      </a>
    </div>

    <div class="lines">
      <div v-for="l in lines" :key="l.name" class="card"><span class="line" :style="{ background: l.bg, color: l.fg }">{{ l.name }}</span></div>
    </div>

    <main class="content">
      <section class="map-col">
        <h2>Metro Barcelona network map</h2>
        <svg class="map" width="1069" height="460" viewBox="12 0 3207 1380">
          <path d="M124 59L186 107L124 155L61 107Z" fill="#d12b2b" />
          <text x="98" y="129" font-size="59" textLength="52" lengthAdjust="spacingAndGlyphs" class="icon-letter heavy">M</text>
          <text x="476" y="125" font-size="50" textLength="391" lengthAdjust="spacingAndGlyphs" font-weight="700">Xarxa de Metro</text>
          <text x="1460" y="125" font-size="50" textLength="328" lengthAdjust="spacingAndGlyphs">Red de Metro</text>
          <text x="2415" y="125" font-size="50" textLength="348" lengthAdjust="spacingAndGlyphs" font-style="italic">Metro network</text>
          <g transform="translate(3016 57) scale(1.22 1.22)">
            <path fill="#d12b2b" d="M1 54C-3 28 26 1 64 1C90 1 105 15 105 34C105 58 77 81 45 81C22 81 8 69 9 51C10 35 20 24 36 17C19 20 6 34 1 54Z" />
            <text x="24" y="51" font-size="27" textLength="67" lengthAdjust="spacingAndGlyphs" class="mark-text">TMB</text>
          </g>

          <rect x="12" y="190" width="3207" height="1190" fill="#f0f0f0" />
          <path d="M800 190L1085 480L1105 498H1670L1750 445L2463 442V190Z" fill="#e3efe4" />
          <path :d="parks" fill="#e0ede0" />
          <path d="M425 190V1275Q425 1290 436 1300L520 1385M3230 300L2850 688L2644 872Q2632 884 2632 905V1380" fill="none" stroke="#c6dcf6" stroke-width="23" />
          <path :d="roads" fill="none" stroke="#fff" stroke-width="9" stroke-linejoin="round" />
          <path d="M1330 190V440L1410 560" fill="none" stroke="#fff" stroke-width="9" stroke-dasharray="4 4" />
          <path d="M2153 355H2186V388H2153" fill="none" stroke="#fff" stroke-width="7" />
          <path :d="cream" fill="#fbe0a6" />
          <circle cx="2127" cy="463" r="19" fill="#fbe0a6" /><circle cx="1318" cy="1317" r="15" fill="#fbe0a6" /><circle cx="1942" cy="1332" r="15" fill="#fbe0a6" />

          <path :d="rails" fill="none" stroke="#9c9c9c" stroke-width="10" stroke-linejoin="round" />
          <path d="M311 210V272M537 210V272M1387 210V272M2689 210V272M2858 210V272" stroke="#9c9c9c" stroke-width="10" stroke-dasharray="3 3" />
          <path d="M1600 498H1585Q1574 500 1574 515Q1575 532 1590 532H1613V600" fill="none" stroke="#888" stroke-width="4" stroke-dasharray="4 5" />
          <path :d="trams" fill="none" stroke="#3a9f8c" stroke-width="11" stroke-linejoin="round" />
          <path :d="trams" fill="none" stroke="#e4f3ef" stroke-width="5.5" stroke-linejoin="round" />
          <path :d="trams" fill="none" stroke="#3a9f8c" stroke-width="1.8" stroke-linejoin="round" />
          <path d="M588 393L612 377M598 641L620 663M494 749L516 771M1455 940L1475 917M625 430L632 425M655 473L662 468M685 512L692 507M660 603L668 609M704 720V728M1225 766L1235 756M1338 843L1345 834M1400 886L1407 877M1852 1210L1860 1202M2250 1352V1368M2362 1352V1368M2725 1352V1368" stroke="#3a9f8c" stroke-width="10" />
          <path v-for="r in routes" :key="r.c" :d="r.d" fill="none" :stroke="r.c" stroke-width="12" stroke-linejoin="round" />

          <g v-for="t in tiles" :key="t.ox + '-' + t.oy" :transform="`translate(${t.ox} ${t.oy})`">
            <text v-for="(l, i) in t.labels" :key="i" v-bind="fit(l)" :class="'lb-' + l[0]">{{ l[4] }}</text>
          </g>

          <path v-for="d in links" :key="d" :d="d" fill="none" stroke="#000" stroke-width="18" stroke-linejoin="round" />
          <circle v-for="(p, i) in linkDots" :key="'k' + i" :cx="p[0]" :cy="p[1]" r="13.5" fill="#fff" stroke="#000" stroke-width="5" />
          <path v-for="d in links" :key="'w' + d" :d="d" fill="none" stroke="#fff" stroke-width="8" stroke-linejoin="round" />
          <circle v-for="(p, i) in rings" :key="'r' + i" :cx="p[0]" :cy="p[1]" r="13.5" fill="#fff" :stroke="i === rings.length - 1 ? '#d2312d' : '#000'" stroke-width="5" />

          <g v-for="(p, i) in plates" :key="'p' + i">
            <rect :x="p[0]" :y="p[1]" :width="p[2]" :height="p[3]" fill="#000" />
            <text v-for="(s, j) in p[4]" :key="s" :x="s === 'Reina' ? p[0] + p[2] - 6 : p[0] + 6" :y="p[1] + 25 + j * 28.5" font-size="25" :text-anchor="s === 'Reina' ? 'end' : 'start'" :textLength="plateFit(p, s)" lengthAdjust="spacingAndGlyphs" class="plate">{{ s }}</text>
          </g>

          <g v-for="(b, i) in badges" :key="'b' + i">
            <rect :x="b[0]" :y="b[1]" :width="badgeSize(b)" :height="badgeSize(b)" :fill="b[3]" :stroke="b[3] === '#fff' ? '#777' : 'none'" stroke-width="2.5" />
            <g v-if="b[2] === 'M'"><path :d="`M${b[0] + 17} ${b[1] + 7}l14 10l-14 10l-14 -10z`" fill="#fff" /><circle :cx="b[0] + 17" :cy="b[1] + 17" r="4.5" :fill="b[3]" /></g>
            <path v-else-if="b[2] === 'T'" :d="`M${b[0]} ${b[1] + 34}L${b[0] + 22} ${b[1] + 9}M${b[0] + 12} ${b[1] + 4}L${b[0] + 34} ${b[1] + 26}`" stroke="#fff" stroke-width="7" />
            <path v-else-if="b[2] === 'F'" :d="`M${b[0] + 6} ${b[1] + 22}q5 -11 11 -5t9 -4M${b[0] + 8} ${b[1] + 26}q5 -11 11 -5t8 -5`" fill="none" stroke="#fff" stroke-width="3" />
            <g v-else-if="b[2] === 'i'"><circle :cx="b[0] + 17" :cy="b[1] + 17" r="14" fill="#dc3a2a" /><path :d="`M${b[0] + 17} ${b[1] + 7}v5m0 3v12`" stroke="#fff" stroke-width="5" /></g>
            <path v-else-if="b[2] === '◢'" :d="`M${b[0] + 5} ${b[1] + 26}L${b[0] + 29} ${b[1] + 8}v9L${b[0] + 12} ${b[1] + 28}z`" :fill="b[4] || '#fff'" />
            <path v-else-if="b[2] === '▣'" :d="`M${b[0] + 10} ${b[1] + 9}h14v17h-14zM${b[0] + 13} ${b[1] + 4}h8v3h-8zM${b[0] + 8} ${b[1] + 28}h18v3h-18z`" :fill="b[4] || '#fff'" />
            <path v-else-if="b[2] === '▬'" :d="`M${b[0] + 2} ${b[1] + 13}h30v9h-30z`" :fill="b[4]" />
            <text v-else :x="b[0] + badgeSize(b) / 2 + (b[2] === 'R' ? 4 : 0)" :y="b[1] + badgeSize(b) * 0.76" :font-size="badgeSize(b) * 0.72" :textLength="b[2].length > 2 ? badgeSize(b) - 3 : undefined" lengthAdjust="spacingAndGlyphs" text-anchor="middle" :fill="b[4] || '#fff'" font-weight="700">{{ b[2] }}</text>
          </g>
        </svg>
      </section>

      <aside class="files">
        <div v-for="f in files" :key="f.type" class="file" :class="f.type.toLowerCase()">
          <svg class="doc" width="36" height="44" viewBox="0 0 36 44" fill="none" stroke="#333" stroke-width="2.8" stroke-linejoin="round"><path d="M2 2h24.5L34 9.5V42H2z" /><path d="M26 2v8h8" /><text x="6" y="30" font-size="12" textLength="24" lengthAdjust="spacingAndGlyphs" class="doc-type">{{ f.type }}</text></svg>
          <div class="file-text">
            <strong>Metro Barcelona network map 2025</strong>
            <span class="meta">[{{ f.type }}: {{ f.size }}]<svg width="20" height="20" viewBox="0 0 20 20" fill="none" stroke="#444" stroke-width="2.2"><path d="M5 6.5H2V18h12v-3.5M8.5 11.5L18 2M11 2h7v7" /></svg></span>
          </div>
          <svg class="go" width="16" height="26" viewBox="0 0 16 26" fill="none" stroke="#444" stroke-width="3.4" stroke-linecap="round"><path d="M3 3l10 10L3 23" /></svg>
        </div>
      </aside>
    </main>
  </div>
</template>

<style>
body { margin: 0; overflow: hidden; }
</style>

<style scoped>
.page { width: 1930px; height: 1530px; overflow: hidden; background: #fff; font-family: "Liberation Sans", Arial, sans-serif; color: #000; }
.topbar { height: 54px; background: #424242; color: #fff; display: flex; justify-content: flex-end; padding-right: 57px; box-sizing: border-box; font-size: 24px; }
.top-item { display: flex; align-items: center; height: 50px; white-space: nowrap; }
.help span { margin-left: 16px; }
.account { margin-left: 63px; }
.account span { margin-left: 21px; }
.language { margin-left: 57px; }
.language span { margin-left: 16px; }
.caret { margin-left: 11px; }
.header { height: 120px; display: flex; align-items: center; box-shadow: 0 6px 22px rgba(0, 0, 0, .21); position: relative; }
.logo { margin-left: 63px; }
.nav { display: flex; gap: 44px; margin-left: 567px; font-size: 28px; white-space: nowrap; }
.dots { margin-left: auto; margin-right: 61px; }
.search { width: 150px; height: 120px; border-left: 2px solid #e4e4e4; }
.search svg { display: block; margin: 34px 0 0 66px; }
.crumbs { display: flex; align-items: center; height: 52px; margin: 52px 42px 0 64px; font-size: 24px; white-space: nowrap; }
.home { margin-top: 4px; }
.crumb-link { color: #bb2725; border-left: 2px solid #e4e4e4; padding-left: 28px; margin-left: 28px; line-height: 52px; }
.sep { margin: 0 26px 0 30px; }
.crumb-current { color: #707070; }
.share { margin-left: auto; margin-top: -4px; }
h1 { margin: 94px 0 0; padding-left: 21px; font-size: 72px; line-height: 88px; text-align: center; color: #333; font-weight: 700; white-space: nowrap; }
.lead { margin: 32px 0 0; padding-left: 21px; text-align: center; font-size: 28px; line-height: 40px; color: #666; white-space: nowrap; }
.tabs { margin: 80px 42px 0 64px; padding-left: 50px; height: 122px; border-bottom: 2px solid #e6e6e6; display: flex; font-size: 32px; color: #666; }
.tab { display: flex; align-items: center; height: 122px; box-sizing: border-box; padding-top: 2px; }
.tab.active { width: 184px; padding-left: 20px; color: #bb2725; font-weight: 700; border-bottom: 4px solid #bb2725; padding-top: 6px; }
.tab.active span { margin-left: 9px; }
.tab:not(.active) { margin-left: 67px; }
.tab:not(.active) span { margin-left: 16px; }
.lines { display: flex; justify-content: space-between; margin: 48px 84px 0 94px; }
.card { width: 112px; height: 128px; border-radius: 16px; background: #f2f3f8; display: flex; align-items: center; justify-content: center; }
.line { width: 80px; height: 80px; display: flex; align-items: center; justify-content: center; font-size: 28px; font-weight: 700; white-space: nowrap; }
.content { display: flex; align-items: flex-start; margin-left: 94px; }
.map-col { width: 1069px; }
h2 { margin: 80px 0 0; height: 78px; line-height: 50px; font-size: 42px; color: #333; white-space: nowrap; }
.map { display: block; }
.files { width: 503px; margin: 291px 0 0 144px; }
.file { display: flex; align-items: flex-start; border-top: 2px solid #e6e6e6; height: 180px; box-sizing: content-box; }
.file.pdf .doc, .file.pdf .file-text, .file.pdf .go { position: relative; top: 12px; }
.doc { margin: 30px 0 0 29px; }
.file-text { width: 300px; margin: 32px 0 0 25px; display: flex; flex-direction: column; }
.file-text strong { font-size: 32px; line-height: 40px; }
.meta { font-size: 28px; line-height: 36px; color: #666; white-space: nowrap; }
.meta svg { margin-left: 7px; vertical-align: -3px; }
.go { margin: 41px 0 0 73px; }
.mark-text { fill: #fff; font-weight: 700; font-style: italic; stroke: #fff; stroke-width: .8px; }
.icon-letter { fill: #fff; font-weight: 700; stroke: #fff; stroke-width: .6px; }
.icon-letter.heavy { stroke-width: 1.3px; }
.doc-type { fill: #333; stroke: #333; stroke-width: .3px; }
.lb-m { font-weight: 700; fill: #161616; }
.lb-r { fill: #222; stroke: #222; stroke-width: .4px; }
.lb-a { fill: #a5a5a5; stroke: #a5a5a5; stroke-width: .4px; }
.lb-t { fill: #a9a9a9; }
.lb-x { fill: #222; stroke: #222; stroke-width: .5px; }
.plate { fill: #fff; font-weight: 700; }
</style>
